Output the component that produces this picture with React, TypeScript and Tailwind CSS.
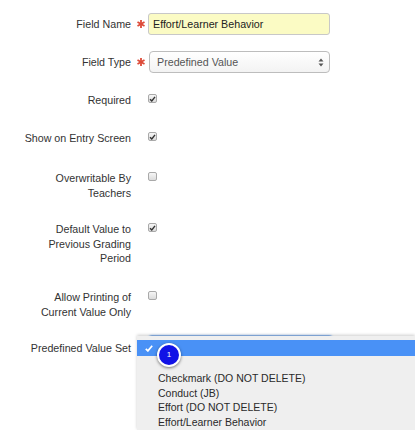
import React from "react";

const Asterisk = () => (
  <svg width="8" height="8" viewBox="0 0 8 8" className="shrink-0">
    <g stroke="#dd4b39" strokeWidth="1.8" strokeLinecap="butt">
      <line x1="4" y1="0" x2="4" y2="8" />
      <line x1="0.5" y1="2" x2="7.5" y2="6" />
      <line x1="0.5" y1="6" x2="7.5" y2="2" />
    </g>
  </svg>
);

const Checkbox = ({ checked }: { checked: boolean }) => (
  <div className="w-[9px] h-[9px] mt-[1px] rounded-[2px] border border-[#a9a9a9] bg-gradient-to-b from-[#f6f6f6] to-[#dcdcdc] flex items-center justify-center shrink-0">
    {checked && (
      <svg width="7" height="6" viewBox="0 0 7 6">
        <path d="M1 3.2 L2.8 5 L6 0.8" stroke="#333" strokeWidth="1.4" fill="none" />
      </svg>
    )}
  </div>
);

const Label = ({ children }: { children: React.ReactNode }) => (
  <div className="w-[131px] shrink-0 text-right text-[#333] leading-[14.5px]">{children}</div>
);

export default function App() {
  return (
    <div
      className="relative w-[415px] h-[430px] overflow-hidden bg-white text-[10.7px]"
      style={{ fontFamily: '"Liberation Sans", Arial, sans-serif' }}
    >
      <div className="flex flex-col">
        {/* Field Name */}
        <div className="flex items-center mt-[13px] h-[22px]">
          <Label>Field Name</Label>
          <div className="ml-[6px] mr-[3px] flex items-center">
            <Asterisk />
          </div>
          <div className="w-[182px] h-[22px] rounded-[3px] border border-[#c8c8c8] bg-[#fbfbc4] flex items-center pl-[4px] text-[#222]">
            Effort/Learner Behavior
          </div>
        </div>

        {/* Field Type */}
        <div className="flex items-center mt-[16px] h-[22px]">
          <Label>Field Type</Label>
          <div className="ml-[6px] mr-[4px] flex items-center">
            <Asterisk />
          </div>
          <div className="w-[181px] h-[22px] rounded-[4px] border border-[#bdbdbd] bg-gradient-to-b from-white to-[#f3f3f3] flex items-center justify-between pl-[7px] pr-[5px] text-[#555]">
            <span>Predefined Value</span>
            <svg width="6" height="9" viewBox="0 0 6 9">
              <path d="M3 0.5 L5.5 3.5 L0.5 3.5 Z" fill="#555" />
              <path d="M3 8.5 L5.5 5.5 L0.5 5.5 Z" fill="#555" />
            </svg>
          </div>
        </div>

        {/* Required */}
        <div className="flex items-start mt-[20px]">
          <Label>Required</Label>
          <div className="ml-[17px]">
            <Checkbox checked />
          </div>
        </div>

        {/* Show on Entry Screen */}
        <div className="flex items-start mt-[23.5px]">
          <Label>Show on Entry Screen</Label>
          <div className="ml-[17px]">
            <Checkbox checked />
          </div>
        </div>

        {/* Overwritable */}
        <div className="flex items-start mt-[25.5px]">
          <Label>
            Overwritable By
            <br />
            Teachers
          </Label>
          <div className="ml-[17px]">
            <Checkbox checked={false} />
          </div>
        </div>

        {/* Default Value */}
        <div className="flex items-start mt-[22px]">
          <Label>
            Default Value to
            <br />
            Previous Grading
            <br />
            Period
          </Label>
          <div className="ml-[17px]">
            <Checkbox checked />
          </div>
        </div>

        {/* Allow Printing */}
        <div className="flex items-start mt-[24.5px]">
          <Label>
            Allow Printing of
            <br />
            Current Value Only
          </Label>
          <div className="ml-[17px]">
            <Checkbox checked={false} />
          </div>
        </div>

        {/* Predefined Value Set */}
        <div className="flex items-start mt-[22px]">
          <Label>Predefined Value Set</Label>
          <div className="ml-[6px] mr-[3px] mt-[3px] flex items-center">
            <Asterisk />
          </div>
          <div className="w-[185px] h-[22px] -mt-[6px] rounded-[4px] border border-[#8fb8ee] shadow-[0_0_2px_#9cc3f5] bg-white" />
        </div>
      </div>

      {/* Open dropdown menu */}
      <div className="absolute left-[137px] top-[336px] right-0 bottom-0 bg-[#efefef] shadow-[0_-1px_3px_rgba(0,0,0,0.2)] pt-[4px] text-[#2a2a2a] text-[10.5px]">
        <div className="h-[16px] bg-[#4991f6] flex items-center pl-[8px]">
          <svg width="8" height="7" viewBox="0 0 8 7">
            <path d="M0.8 3.8 L2.9 5.9 L7.2 0.8" stroke="white" strokeWidth="1.7" fill="none" />
          </svg>
        </div>
        <div className="pl-[21px] pt-[15px] leading-[14.5px]">
          <div>Checkmark (DO NOT DELETE)</div>
          <div>Conduct (JB)</div>
          <div>Effort (DO NOT DELETE)</div>
          <div>Effort/Learner Behavior</div>
        </div>
      </div>

      {/* Step badge */}
      <div className="absolute left-[157px] top-[343px] w-[24px] h-[24px] rounded-full bg-[#1212e6] border-2 border-white shadow-[0_1px_3px_rgba(0,0,0,0.5)] flex items-center justify-center text-white text-[8px]">
        1
      </div>
    </div>
  );
}
